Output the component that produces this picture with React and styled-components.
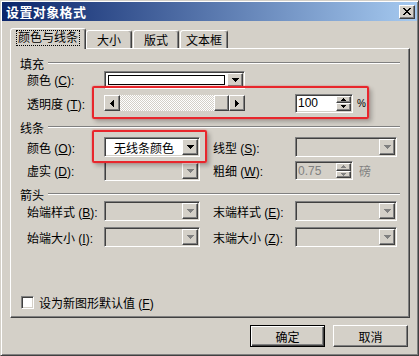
import React from "react";
import styled, { createGlobalStyle, css } from "styled-components";

const GlobalStyle = createGlobalStyle`
  html, body {
    margin: 0;
    padding: 0;
    background: #d4d0c8;
  }
  * {
    box-sizing: border-box;
  }
`;

const raised = css`
  border: 1px solid;
  border-color: #fff #404040 #404040 #fff;
  box-shadow: inset -1px -1px #808080;
  background: #d4d0c8;
`;

const sunken = css`
  border: 1px solid;
  border-color: #808080 #fff #fff #808080;
  box-shadow: inset 1px 1px #404040, inset -1px -1px #d4d0c8;
  padding: 1px;
`;

const Window = styled.div`
  width: 419px;
  height: 356px;
  background: #d4d0c8;
  border: 1px solid;
  border-color: #d4d0c8 #404040 #404040 #d4d0c8;
  box-shadow: inset 1px 1px #fff, inset -1px -1px #808080;
  padding: 1px;
  display: flex;
  flex-direction: column;
  font-family: "Liberation Sans", "Noto Sans CJK SC", sans-serif;
  font-size: 12px;
  color: #000;
`;

const TitleBar = styled.div`
  height: 19px;
  background: linear-gradient(to right, #0a246a, #a6caf0);
  display: flex;
  align-items: center;
  justify-content: space-between;
  padding: 0 2px 0 4px;
  color: #fff;
  font-weight: bold;
  font-size: 13px;
  letter-spacing: 0.4px;
`;

const CloseBtn = styled.div`
  width: 16px;
  height: 14px;
  ${raised};
  display: flex;
  align-items: center;
  justify-content: center;
`;

const Body = styled.div`
  padding: 7px 0 0 8px;
  display: flex;
  flex-direction: column;
`;

const Tabs = styled.div`
  display: flex;
  align-items: flex-end;
  height: 20px;
`;

const Tab = styled.div`
  width: ${p => p.$w}px;
  height: ${p => (p.$active ? 21 : 18)}px;
  margin-bottom: ${p => (p.$active ? -1 : 0)}px;
  margin-left: ${p => p.$ml || 0}px;
  border: 1px solid;
  border-bottom: none;
  border-color: #fff #404040 transparent #fff;
  box-shadow: inset -1px 0 #808080;
  border-radius: 3px 3px 0 0;
  background: #d4d0c8;
  display: flex;
  align-items: center;
  justify-content: center;
  padding-bottom: ${p => (p.$active ? 2 : 0)}px;
  position: relative;
  z-index: ${p => (p.$active ? 2 : 0)};
`;

const Focus = styled.span`
  outline: 1px dotted #000;
  outline-offset: 0;
  padding: 0 1px;
  line-height: 14px;
`;

const Panel = styled.div`
  width: 400px;
  height: 270px;
  border: 1px solid;
  border-color: #fff #404040 #404040 #fff;
  box-shadow: inset -1px -1px #808080;
  padding: 7px 9px 8px 9px;
  display: flex;
  flex-direction: column;
  position: relative;
  z-index: 1;
`;

const GroupHead = styled.div`
  display: flex;
  align-items: center;
  gap: 4px;
  height: 14px;
  margin-top: ${p => p.$mt || 0}px;
  &::after {
    content: "";
    flex: 1;
    border-top: 1px solid #808080;
    border-bottom: 1px solid #fff;
  }
`;

const Row = styled.div`
  display: flex;
  align-items: center;
  height: ${p => p.$h}px;
  padding-left: 7px;
`;

const Label = styled.span`
  width: ${p => p.$w || 77}px;
  margin-left: ${p => p.$ml || 0}px;
  flex: none;
  white-space: nowrap;
`;

const Key = styled.u`
  text-decoration: underline;
  text-underline-offset: 1px;
`;

const Combo = styled.div`
  width: ${p => p.$w}px;
  height: ${p => p.$h || 20}px;
  ${sunken};
  background: ${p => (p.$disabled ? "#d4d0c8" : "#fff")};
  display: flex;
  flex: none;
`;

const ComboText = styled.div`
  flex: 1;
  display: flex;
  align-items: center;
  justify-content: center;
  padding: 2px;
`;

const Swatch = styled.div`
  width: 100%;
  height: 100%;
  border: 1px solid #000;
  background: #fff;
`;

const DropBtn = styled.div`
  width: 16px;
  ${raised};
  display: flex;
  align-items: center;
  justify-content: center;
`;

const Highlight = styled.div`
  position: relative;
  display: flex;
  align-items: center;
  &::after {
    content: "";
    position: absolute;
    inset: ${p => p.$inset};
    border: 2px solid #e8262c;
    border-radius: 2px;
    box-shadow: 0 0 2px rgba(232, 38, 44, 0.55), 3px 3px 4px rgba(0, 0, 0, 0.22);
    pointer-events: none;
  }
`;

const Scroll = styled.div`
  width: 141px;
  height: 16px;
  display: flex;
  flex: none;
`;

const ScrollBtn = styled.div`
  width: 16px;
  ${raised};
  display: flex;
  align-items: center;
  justify-content: center;
`;

const Track = styled.div`
  flex: 1;
  background-color: #fff;
  background-image: repeating-conic-gradient(#d4d0c8 0 25%, #fff 0 50%);
  background-size: 2px 2px;
  display: flex;
  justify-content: flex-end;
`;

const Thumb = styled.div`
  width: 15px;
  ${raised};
`;

const Spin = styled.div`
  width: 58px;
  height: 19px;
  ${sunken};
  background: ${p => (p.$disabled ? "#d4d0c8" : "#fff")};
  color: ${p => (p.$disabled ? "#808080" : "#000")};
  display: flex;
  flex: none;
  margin-left: ${p => p.$ml || 0}px;
`;

const SpinText = styled.div`
  flex: 1;
  display: flex;
  align-items: center;
  padding-left: 1px;
  font-size: 12px;
`;

const SpinBtns = styled.div`
  width: 15px;
  display: flex;
  flex-direction: column;
`;

const SpinBtn = styled.div`
  flex: 1;
  ${raised};
  display: flex;
  align-items: center;
  justify-content: center;
`;

const Unit = styled.span`
  margin-left: ${p => p.$ml}px;
  font-size: ${p => p.$size || 12}px;
  color: ${p => (p.$disabled ? "#808080" : "#000")};
`;

const Spacer = styled.div`
  flex: 1;
`;

const CheckRow = styled.div`
  display: flex;
  align-items: center;
  gap: 5px;
  padding-left: 1px;
  height: 14px;
`;

const CheckBox = styled.div`
  width: 13px;
  height: 13px;
  ${sunken};
  background: #fff;
`;

const Buttons = styled.div`
  display: flex;
  justify-content: flex-end;
  gap: 8px;
  margin-top: 7px;
  width: 400px;
  padding-right: 2px;
`;

const Button = styled.button`
  width: 75px;
  height: 22px;
  padding: 0;
  font: inherit;
  color: #000;
  background: #d4d0c8;
  border: 1px solid;
  ${p =>
    p.$default
      ? css`
          border-color: #000;
          box-shadow: inset 1px 1px #fff, inset -1px -1px #404040, inset -2px -2px #808080;
        `
      : css`
          border-color: #fff #404040 #404040 #fff;
          box-shadow: inset -1px -1px #808080;
        `}
`;

const Down = ({ disabled }) => (
  <svg width="7" height="4" shapeRendering="crispEdges">
    <path d="M0 0h7v1h-1v1h-1v1h-1v1h-1v-1h-1v-1h-1v-1h-1z" fill={disabled ? "#808080" : "#000"} />
  </svg>
);

const Left = () => (
  <svg width="4" height="7" shapeRendering="crispEdges">
    <path d="M4 0v7h-1v-1h-1v-1h-1v-1h-1v-1h1v-1h1v-1h1v-1z" fill="#000" />
  </svg>
);

const Right = () => (
  <svg width="4" height="7" shapeRendering="crispEdges">
    <path d="M0 0v7h1v-1h1v-1h1v-1h1v-1h-1v-1h-1v-1h-1v-1z" fill="#000" />
  </svg>
);

const Tiny = ({ up, disabled }) => (
  <svg width="5" height="3" shapeRendering="crispEdges">
    <path
      d={up ? "M2 0h1v1h1v1h1v1h-5v-1h1v-1h1z" : "M0 0h5v1h-1v1h-1v1h-1v-1h-1v-1h-1z"}
      fill={disabled ? "#808080" : "#000"}
    />
  </svg>
);

function Dropdown({ w, h, disabled, children }) {
  return (
    <Combo $w={w} $h={h} $disabled={disabled}>
      <ComboText>{children}</ComboText>
      <DropBtn>
        <Down disabled={disabled} />
      </DropBtn>
    </Combo>
  );
}

function Spinner({ value, disabled, ml }) {
  return (
    <Spin $disabled={disabled} $ml={ml}>
      <SpinText>{value}</SpinText>
      <SpinBtns>
        <SpinBtn>
          <Tiny up disabled={disabled} />
        </SpinBtn>
        <SpinBtn>
          <Tiny disabled={disabled} />
        </SpinBtn>
      </SpinBtns>
    </Spin>
  );
}

export default function App() {
  return (
    <>
      <GlobalStyle />
      <Window>
        <TitleBar>
          <span>设置对象格式</span>
          <CloseBtn>
            <svg width="8" height="7" shapeRendering="crispEdges">
              <path
                d="M0 0h2v1h1v1h2v-1h1v-1h2v1h-1v1h-1v1h-1v1h1v1h1v1h1v1h-2v-1h-1v-1h-2v1h-1v1h-2v-1h1v-1h1v-1h1v-1h-1v-1h-1v-1h-1z"
                fill="#000"
              />
            </svg>
          </CloseBtn>
        </TitleBar>
        <Body>
          <Tabs>
            <Tab $w={76} $active>
              <Focus>颜色与线条</Focus>
            </Tab>
            <Tab $w={46}>大小</Tab>
            <Tab $w={46} $ml={1}>版式</Tab>
            <Tab $w={48} $ml={1}>文本框</Tab>
          </Tabs>
          <Panel>
            <GroupHead>填充</GroupHead>
            <Row $h={19}>
              <Label>
                颜色 (<Key>C</Key>):
              </Label>
              <Combo $w={141} $h={18}>
                <ComboText>
                  <Swatch />
                </ComboText>
                <DropBtn>
                  <Down />
                </DropBtn>
              </Combo>
            </Row>
            <Row $h={28}>
              <Label>
                透明度 (<Key>T</Key>):
              </Label>
              <Highlight $inset="-8px -3px -6px -12px">
                <Scroll>
                  <ScrollBtn>
                    <Left />
                  </ScrollBtn>
                  <Track>
                    <Thumb />
                  </Track>
                  <ScrollBtn>
                    <Right />
                  </ScrollBtn>
                </Scroll>
                <Spinner value="100" ml={50} />
                <Unit $ml={4} $size={10}>%</Unit>
              </Highlight>
            </Row>

            <GroupHead $mt={3}>线条</GroupHead>
            <Row $h={26}>
              <Label>
                颜色 (<Key>O</Key>):
              </Label>
              <Highlight $inset="-7px -7px -6px -12px">
                <Dropdown w={96}>无线条颜色</Dropdown>
              </Highlight>
              <Label $ml={13} $w={82}>
                线型 (<Key>S</Key>):
              </Label>
              <Dropdown w={102} disabled />
            </Row>
            <Row $h={21}>
              <Label>
                虚实 (<Key>D</Key>):
              </Label>
              <Dropdown w={96} disabled />
              <Label $ml={13} $w={82}>
                粗细 (<Key>W</Key>):
              </Label>
              <Spinner value="0.75" disabled />
              <Unit $ml={6} $disabled>磅</Unit>
            </Row>

            <GroupHead $mt={6}>箭头</GroupHead>
            <Row $h={20}>
              <Label>
                始端样式 (<Key>B</Key>):
              </Label>
              <Dropdown w={96} disabled />
              <Label $ml={13} $w={82}>
                末端样式 (<Key>E</Key>):
              </Label>
              <Dropdown w={102} disabled />
            </Row>
            <Row $h={32}>
              <Label>
                始端大小 (<Key>I</Key>):
              </Label>
              <Dropdown w={96} disabled />
              <Label $ml={13} $w={82}>
                末端大小 (<Key>Z</Key>):
              </Label>
              <Dropdown w={102} disabled />
            </Row>

            <Spacer />
            <CheckRow>
              <CheckBox />
              <span>
                设为新图形默认值 (<Key>F</Key>)
              </span>
            </CheckRow>
          </Panel>
          <Buttons>
            <Button $default>确定</Button>
            <Button>取消</Button>
          </Buttons>
        </Body>
      </Window>
    </>
  );
}
